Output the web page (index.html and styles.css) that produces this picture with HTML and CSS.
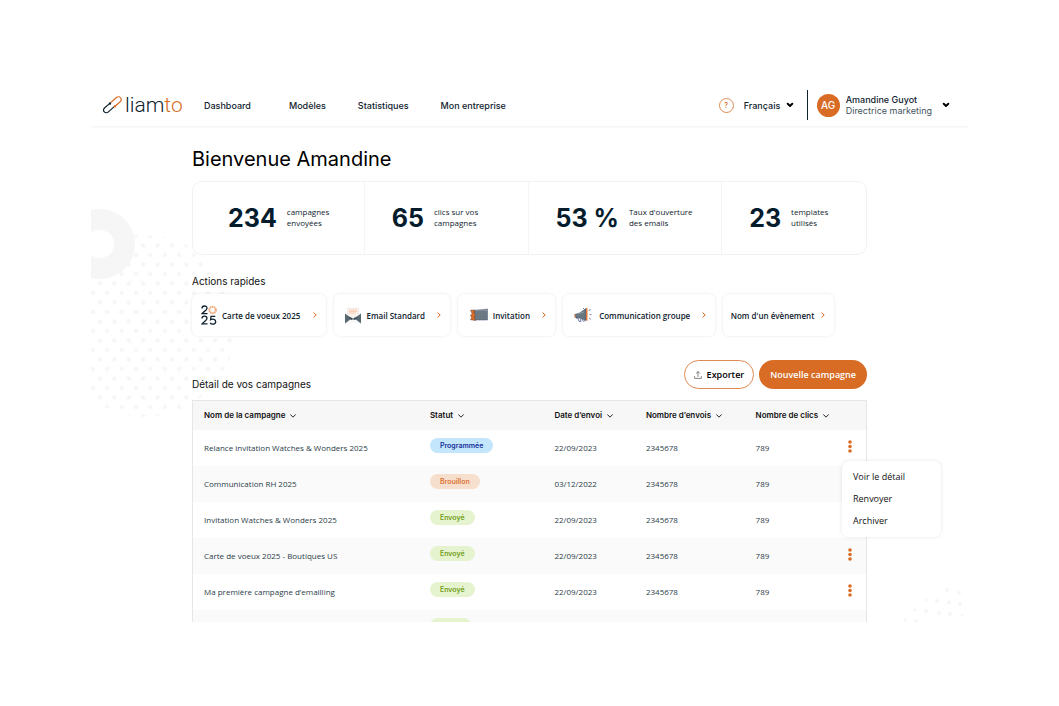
FILE: index.html
```html
<!DOCTYPE html>
<html lang="fr">
<head>
<meta charset="utf-8">
<title>Liamto – Dashboard</title>
<link rel="stylesheet" href="styles.css">
</head>
<body>
<svg class="sprite" aria-hidden="true">
  <symbol id="caret" viewBox="0 0 8 6"><path d="M1.7 1.8 4 4 6.3 1.800" fill="none" stroke="currentColor" stroke-width="2" stroke-linecap="round" stroke-linejoin="round"/></symbol>
  <symbol id="down" viewBox="0 0 6 4"><path d="M.6.7 3 3.200 5.400.7" fill="none" stroke="currentColor" stroke-width=".9" stroke-linecap="round" stroke-linejoin="round"/></symbol>
  <symbol id="next" viewBox="0 0 4 6"><path d="M.8.8 3.200 3 .8 5.200" fill="none" stroke="currentColor" stroke-width="1" stroke-linecap="round" stroke-linejoin="round"/></symbol>
  <symbol id="more" viewBox="0 0 4 13"><g fill="currentColor"><circle cx="2" cy="2" r="1.800"/><circle cx="2" cy="6.500" r="1.800"/><circle cx="2" cy="11" r="1.800"/></g></symbol>
</svg>
<div class="app">
  <svg class="decor decor-left" viewBox="0 0 145 215" aria-hidden="true">
    <defs>
      <pattern id="dots" x="1.800" y="69.700" width="14.400" height="19" patternUnits="userSpaceOnUse">
        <circle cx="7.200" cy="4.800" r="2.200"/><circle cx="0" cy="14.300" r="2.200"/><circle cx="14.400" cy="14.300" r="2.200"/>
      </pattern>
    </defs>
    <circle cx="54" cy="117" r="91" fill="url(#dots)"/>
    <circle class="ring" cx="9" cy="35" r="24.500"/>
  </svg>
  <svg class="decor decor-right" viewBox="0 0 64 38" aria-hidden="true">
    <circle cx="43" cy="6" r="2"/><circle cx="55" cy="8.500" r="2"/><circle cx="22" cy="16" r="1.500"/><circle cx="33" cy="17" r="2"/><circle cx="45" cy="18.500" r="2"/><circle cx="56" cy="20" r="2"/><circle cx="11" cy="26" r="1.500"/><circle cx="22" cy="27" r="2"/><circle cx="35" cy="29" r="2"/><circle cx="46" cy="30" r="2"/><circle cx="58" cy="31" r="1.500"/><circle cx="1" cy="36" r="1.500"/><circle cx="12" cy="37" r="2"/><circle cx="24" cy="38" r="1.500"/>
  </svg>

  <header class="topbar">
    <a class="logo" href="#" aria-label="liamto">
      <svg viewBox="0 0 20 18" fill="none" stroke-width="1.200" stroke-linecap="round">
        <path stroke="#10222e" d="M6.800 7.400 1.700 11.800c-1.300 1.200-1.400 3-.4 4.100 1.100 1.200 2.900 1.100 4.100 0l5.200-4.800"/>
        <path stroke="#d86c24" d="M8.400 6 13.200 1.700c1.300-1.200 3.200-1.300 4.300-.1 1.100 1.100 1 2.900-.3 4.100l-5.200 4.600"/>
        <circle cx="7" cy="7.500" r=".6" fill="#10222e" stroke="#10222e"/>
        <circle cx="12" cy="10.200" r=".6" fill="#d86c24" stroke="#d86c24"/>
      </svg>
      <span class="wordmark">liam<span class="accent">to</span></span>
    </a>
    <nav class="nav">
      <a class="nav-home" href="#">Dashboard</a>
      <a href="#">Modèles</a>
      <a href="#">Statistiques</a>
      <a href="#">Mon entreprise</a>
    </nav>
    <div class="tools">
      <button class="help" aria-label="Aide">?</button>
      <label class="language">
        <select aria-label="Langue"><option>Français</option></select>
        <svg class="caret"><use href="#caret"/></svg>
      </label>
      <button class="profile">
        <span class="avatar">AG</span>
        <span class="identity"><span class="name">Amandine Guyot</span><span class="role">Directrice marketing</span></span>
        <svg class="caret"><use href="#caret"/></svg>
      </button>
    </div>
  </header>

  <main class="content">
    <h1>Bienvenue Amandine</h1>

    <section class="stats">
      <div class="stat stat-first"><strong>234</strong><span>campagnes<br>envoyées</span></div>
      <div class="stat"><strong>65</strong><span>clics sur vos<br>campagnes</span></div>
      <div class="stat"><strong>53 %</strong><span>Taux d'ouverture<br>des emails</span></div>
      <div class="stat"><strong>23</strong><span>templates<br>utilisés</span></div>
    </section>

    <h2>Actions rapides</h2>
    <div class="actions">
      <button class="action">
        <svg class="icon" viewBox="0 0 16 20" fill="none" stroke="#10222e" stroke-width="1.300">
          <path d="M1 3.500C1 .2 6 .2 6 3.200 6 5 3 6.500 1 8.600h5.500M1 13.500c0-3.300 5-3.300 5 0 0 1.800-3 3-5 5.400h5.500M14.300 11.300H10l-.4 3.500c2-1.200 5.100-.6 5.100 1.900 0 2.900-4.500 3.200-5.500 1"/>
          <circle cx="11.600" cy="5" r="3.200" stroke="#f0a878" stroke-width="2" stroke-dasharray="1.500 .5"/>
        </svg>
        <span>Carte de voeux 2025</span><svg class="next"><use href="#next"/></svg>
      </button>
      <button class="action action-mail">
        <svg class="icon" viewBox="0 0 16 20">
          <path d="M2.500 3h11v9h-11z" fill="#fdf3ed" stroke="#e5dfdc" stroke-width=".5"/>
          <path d="M4 5h8M4 6.500h8M4 8h7" stroke="#f3b48e" stroke-width=".6"/>
          <path d="m0 8 8 6 8-6v10H0z" fill="#e9ebed"/>
          <path d="m0 8.500 6.500 5L0 18zM16 8.500l-6.500 5L16 18z" fill="#586873"/>
          <path d="M0 18.300 6.500 13 8 14l1.500-1 6.500 5.300" fill="#f8f8f8" stroke="#384a56" stroke-width=".6"/>
          <path d="m3 11 5 3 5-3-3 4-2-.7-2 .7z" fill="#2d3d49"/>
        </svg>
        <span>Email Standard</span><svg class="next"><use href="#next"/></svg>
      </button>
      <button class="action action-ticket">
        <svg class="icon wide" viewBox="0 0 18 20">
          <path d="M4 5.500 17.500 4v11H4z" fill="#6d7982" stroke="#4d5374" stroke-width=".5"/>
          <path d="M5 5h12v1" stroke="#aeb5bb" stroke-width=".7" fill="none"/>
          <path d="M.5 5.200 5 5l-1 2.500 1.200 2L4.500 12l1 3.500-5-.8 1.200-2L.5 10.500 2 8.500z" fill="#dc6b23" stroke="#604944" stroke-width=".5"/>
        </svg>
        <span>Invitation</span><svg class="next"><use href="#next"/></svg>
      </button>
      <button class="action action-group">
        <svg class="icon wide" viewBox="0 0 18 20">
          <path d="m.8 9.500 5-1.600L12 3.500v12L6 13l-4 .2z" fill="#687680" stroke="#414d70" stroke-width=".6"/>
          <path d="m12 3 1.500.4v12.400l-1.500-.4z" fill="#dc7834"/>
          <path d="M1 9.500v3.200" stroke="#dc7834"/>
          <path d="m4 13.400 1 3h2l-.5-2.800M8 14l1.500 2.500 1.500-1" fill="none" stroke="#6370a0" stroke-width=".9"/>
          <path d="m15 6 1.500-2M15.500 9.500h2M15 13l2 1.500M9 3l1.200 1.200" stroke="#4f5a84" stroke-width=".7"/>
          <path d="m4 9 6-2" stroke="#9aa3aa" stroke-width=".8"/>
        </svg>
        <span>Communication groupe</span><svg class="next"><use href="#next"/></svg>
      </button>
      <button class="action action-event"><span>Nom d'un évènement</span><svg class="next"><use href="#next"/></svg></button>
    </div>

    <div class="list-head">
      <h2>Détail de vos campagnes</h2>
      <div class="buttons">
        <button class="btn btn-outline">
          <svg class="upload" viewBox="0 0 8 8" fill="none" stroke="#555" stroke-width=".7" stroke-linecap="round" stroke-linejoin="round"><path d="M4 5.500V.7M2.400 2.200 4 .6l1.600 1.600M.6 5.500v1.900h6.800V5.500"/></svg>
          Exporter
        </button>
        <button class="btn btn-primary">Nouvelle campagne</button>
      </div>
    </div>

    <div class="table-box">
      <table>
        <colgroup><col class="c-name"><col class="c-status"><col class="c-date"><col class="c-sent"><col class="c-clicks"></colgroup>
        <thead>
          <tr>
            <th>Nom de la campagne <svg class="sort"><use href="#down"/></svg></th>
            <th>Statut <svg class="sort"><use href="#down"/></svg></th>
            <th>Date d’envoi <svg class="sort"><use href="#down"/></svg></th>
            <th>Nombre d’envois <svg class="sort"><use href="#down"/></svg></th>
            <th>Nombre de clics <svg class="sort"><use href="#down"/></svg></th>
          </tr>
        </thead>
        <tbody>
          <tr><td>Relance invitation Watches &amp; Wonders 2025</td><td><span class="badge planned">Programmée</span></td><td>22/09/2023</td><td>2345678</td><td><div class="last">789<button class="more" aria-label="Actions"><svg><use href="#more"/></svg></button></div></td></tr>
          <tr><td>Communication RH 2025</td><td><span class="badge draft">Brouillon</span></td><td>03/12/2022</td><td>2345678</td><td>789</td></tr>
          <tr><td>Invitation Watches &amp; Wonders 2025</td><td><span class="badge sent">Envoyé</span></td><td>22/09/2023</td><td>2345678</td><td>789</td></tr>
          <tr><td>Carte de voeux 2025 - Boutiques US</td><td><span class="badge sent">Envoyé</span></td><td>22/09/2023</td><td>2345678</td><td><div class="last">789<button class="more" aria-label="Actions"><svg><use href="#more"/></svg></button></div></td></tr>
          <tr><td>Ma première campagne d’emailling</td><td><span class="badge sent">Envoyé</span></td><td>22/09/2023</td><td>2345678</td><td><div class="last">789<button class="more" aria-label="Actions"><svg><use href="#more"/></svg></button></div></td></tr>
          <tr><td></td><td><span class="badge sent">&emsp;&emsp;&emsp;</span></td><td></td><td></td><td></td></tr>
        </tbody>
      </table>
      <div class="menu">
        <button>Voir le détail</button>
        <button>Renvoyer</button>
        <button>Archiver</button>
      </div>
    </div>
  </main>
</div>
</body>
</html>
```

FILE: styles.css
```css
* { box-sizing: border-box; }
body { margin: 0; padding: 84px 91px; background: #fff; color: #10222e; font-family: Inter, "Liberation Sans", sans-serif; font-size: 9px; }
button, select { font: inherit; color: inherit; border: 0; background: none; padding: 0; margin: 0; }
a { color: inherit; text-decoration: none; }
svg { display: block; flex: none; }
.sprite { position: absolute; width: 0; height: 0; }
.app { position: relative; height: calc(100vh - 168px); overflow: hidden; }

.decor { position: absolute; fill: #f6f6f6; }
.decor-left { left: 0; top: 125px; width: 145px; height: 215px; }
.decor-left pattern circle { fill: #f6f6f6; }
.ring { fill: #fff; stroke: #f6f6f6; stroke-width: 21px; }
.decor-right { right: 0; bottom: 0; width: 64px; height: 38px; }

.topbar { position: relative; display: flex; align-items: center; height: 42px; padding: 0 18px 0 12px; background: #fff; box-shadow: 0 1px 3px rgba(0, 0, 0, .06); }
.logo { display: flex; align-items: center; gap: 2px; width: 101px; }
.logo svg { width: 20px; height: 18px; }
.wordmark { font-family: Roboto, sans-serif; font-weight: 300; font-size: 21px; line-height: 24px; }
.accent { color: #d86c24; }
.nav { display: flex; gap: 32px; font-weight: 500; line-height: 11px; }
.nav-home { margin-right: 6px; }
.tools { display: flex; align-items: center; margin-left: auto; font-weight: 500; }
.help { width: 15px; height: 15px; border: 1px solid #e08a52; border-radius: 50%; color: #d86c24; font-size: 7px; line-height: 13px; }
.language { display: flex; align-items: center; gap: 5px; margin: 0 13px 0 10px; }
.language select { appearance: none; }
.caret { width: 8px; height: 6px; color: #000; }
.profile { display: flex; align-items: center; height: 30px; padding-left: 9px; border-left: 1px solid #10222e; text-align: left; }
.avatar { width: 23px; height: 23px; margin-right: 6px; border-radius: 50%; background: #d86c24; color: #fff; font-size: 10px; line-height: 23px; text-align: center; }
.identity { display: flex; flex-direction: column; margin-right: 10px; line-height: 11px; }
.role { font-weight: 400; color: #44535d; }

.content { position: relative; padding: 21px 101px 0; }
h1 { margin: 0 0 9px; color: #000; font-size: 20px; line-height: 25px; font-weight: 400; }
h2 { margin: 0; color: #111; font-size: 10px; line-height: 14px; font-weight: 400; }

.stats { display: grid; grid-template-columns: 171fr 164fr 194fr 145fr; height: 74px; margin-bottom: 19px; border: 1px solid #f3f1f1; border-radius: 10px; background: #fff; font-family: "Open Sans", sans-serif; font-size: 8px; line-height: 11px; }
.stat { display: flex; align-items: center; gap: 10px; padding-left: 27px; }
.stat + .stat { border-left: 1px solid #f5f5f5; }
.stat-first { padding-left: 35px; }
.stat strong { font-family: Inter, sans-serif; font-size: 25px; line-height: 30px; font-weight: 700; color: #041c2c; }
.stat span { padding-bottom: 2px; }

.actions { display: grid; grid-template-columns: 134fr 115fr 97fr 151fr 111fr; gap: 8px; margin: 6px 33px 24px 0; }
.action { display: flex; align-items: center; gap: 5px; height: 42px; padding: 0 9px; border-radius: 6px; background: #fff; box-shadow: 0 0 3px rgba(0, 0, 0, .1); font-family: "Open Sans", sans-serif; font-size: 8px; font-weight: 600; white-space: nowrap; }
.action-mail { padding-left: 11px; }
.action-ticket { padding-left: 12px; }
.action-group { padding-left: 11px; gap: 7px; }
.action-event { padding-left: 8px; }
.icon { width: 16px; height: 20px; }
.icon.wide { width: 18px; }
.next { width: 4px; height: 6px; margin-left: auto; color: #d86c24; }

.list-head { display: flex; justify-content: space-between; margin-bottom: 11px; }
.list-head h2 { align-self: flex-end; margin-bottom: -2px; }
.buttons { display: flex; gap: 5px; }
.btn { display: flex; align-items: center; gap: 5px; height: 29px; padding: 0 11px; border-radius: 15px; font-family: "Open Sans", sans-serif; font-weight: 600; }
.btn-outline { border: 1px solid #e08a52; background: #fff; color: #000; padding: 0 9px; }
.btn-primary { background: #d86c24; color: #fff; }
.upload { width: 8px; height: 8px; }

.table-box { position: relative; border: 1px solid #e6e6e6; border-width: 1px 1px 0; background: #fff; }
table { width: 100%; table-layout: fixed; border-collapse: collapse; font-family: "Open Sans", sans-serif; font-size: 8px; }
.c-name { width: 35.200%; }
.c-status { width: 18.500%; }
.c-date { width: 13.600%; }
.c-sent { width: 16.300%; }
th { height: 29px; padding: 0 0 2px; background: #f7f7f7; font-family: Inter, sans-serif; font-weight: 600; color: #111; text-align: left; white-space: nowrap; }
.sort { display: inline-block; width: 6px; height: 4px; margin-left: 3px; }
td { height: 36px; padding: 0 0 1px; color: #2b3d49; }
th:first-child, td:first-child { padding-left: 11px; }
tbody tr:nth-child(even) { background: #fafafa; }
td:nth-child(2) { padding-bottom: 5px; }
.badge { display: inline-block; padding: 0 10px; border-radius: 8px; font-family: Inter, sans-serif; font-size: 7px; line-height: 15px; font-weight: 600; }
.planned { background: #c3e6fc; color: #14309a; }
.draft { background: #f7dfce; color: #dc7434; }
.sent { background: #e6f3cf; color: #72a01c; }
.last { display: flex; align-items: center; justify-content: space-between; padding-right: 14px; }
.more { padding-bottom: 3px; color: #d86c24; }
.more svg { width: 4px; height: 13px; }
.menu { position: absolute; top: 60px; right: -75px; display: flex; flex-direction: column; gap: 8px; width: 99px; padding: 9px 11px; border-radius: 7px; background: #fff; box-shadow: 0 0 4px rgba(0, 0, 0, .1); font-family: "Open Sans", sans-serif; color: #111; }
.menu button { line-height: 14px; text-align: left; }
```
